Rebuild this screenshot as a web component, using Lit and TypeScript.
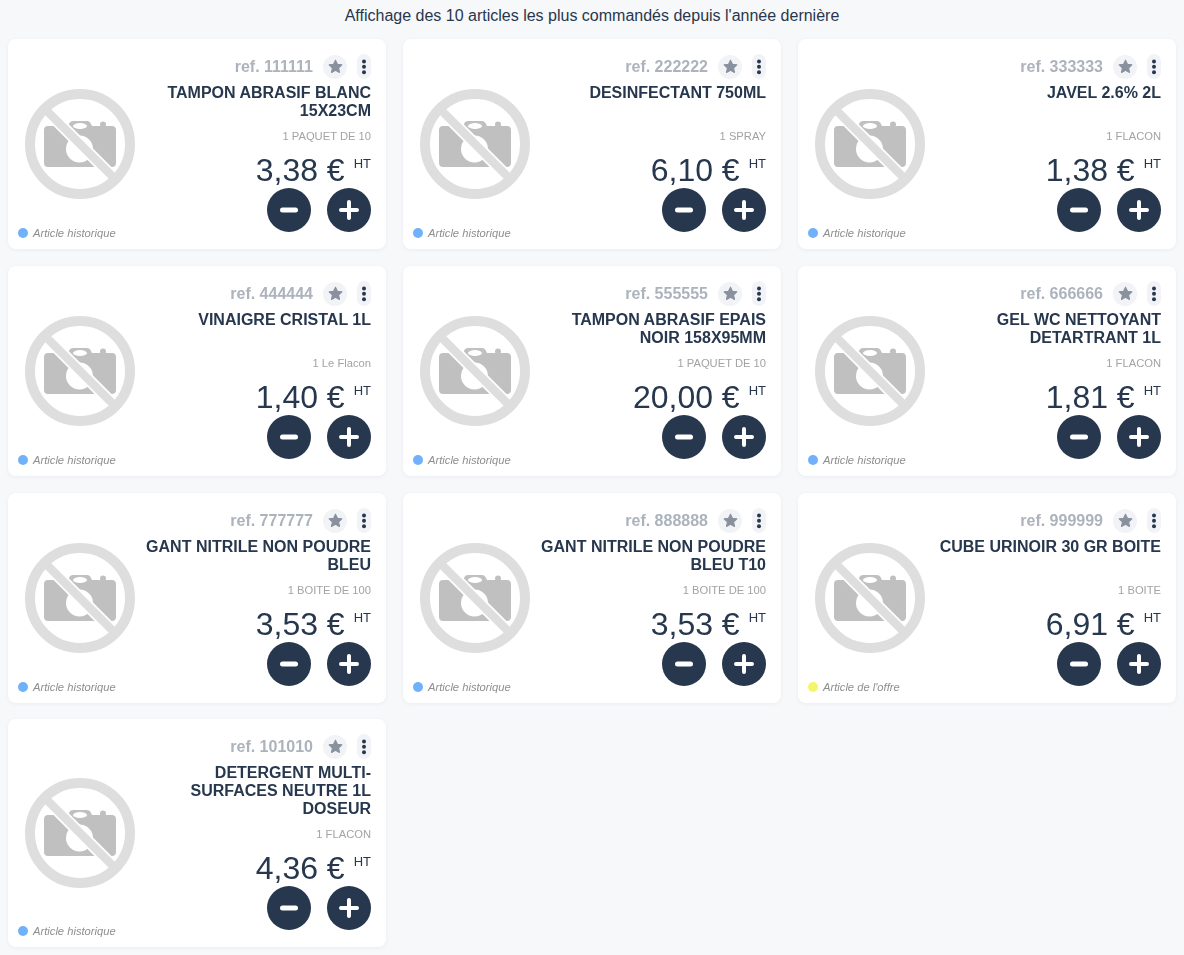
/**
 * Most ordered articles grid
 */

import { LitElement, css, html } from "lit";
import { customElement, property } from "lit/decorators.js";

interface Article {
	ref: string;
	name: string;
	unit: string;
	price: string;
	offer?: boolean;
}

const ARTICLES: Article[] = [
	{ ref: "111111", name: "TAMPON ABRASIF BLANC 15X23CM", unit: "1 PAQUET DE 10", price: "3,38" },
	{ ref: "222222", name: "DESINFECTANT 750ML", unit: "1 SPRAY", price: "6,10" },
	{ ref: "333333", name: "JAVEL 2.6% 2L", unit: "1 FLACON", price: "1,38" },
	{ ref: "444444", name: "VINAIGRE CRISTAL 1L", unit: "1 Le Flacon", price: "1,40" },
	{ ref: "555555", name: "TAMPON ABRASIF EPAIS NOIR 158X95MM", unit: "1 PAQUET DE 10", price: "20,00" },
	{ ref: "666666", name: "GEL WC NETTOYANT DETARTRANT 1L", unit: "1 FLACON", price: "1,81" },
	{ ref: "777777", name: "GANT NITRILE NON POUDRE BLEU", unit: "1 BOITE DE 100", price: "3,53" },
	{ ref: "888888", name: "GANT NITRILE NON POUDRE BLEU T10", unit: "1 BOITE DE 100", price: "3,53" },
	{ ref: "999999", name: "CUBE URINOIR 30 GR BOITE", unit: "1 BOITE", price: "6,91", offer: true },
	{ ref: "101010", name: "DETERGENT MULTI-SURFACES NEUTRE 1L DOSEUR", unit: "1 FLACON", price: "4,36" },
];

const noPhoto = html`
	<svg class="photo" viewBox="0 0 110 110" width="110" height="110">
		<path
			fill="#c0c0c0"
			d="M23 37h20l1.500-3c.7-1.300 2-2 3.500-2h14c1.500 0 2.800.7 3.500 2l1.500 3h20c2.500 0 4 1.500 4 4v33c0 2.500-1.500 4-4 4H23c-2.500 0-4-1.500-4-4V41c0-2.500 1.500-4 4-4z"
		/>
		<circle cx="78" cy="35.500" r="3" fill="#c0c0c0" />
		<ellipse cx="55" cy="37" rx="7" ry="3" fill="#fff" />
		<circle cx="54.500" cy="60" r="13.500" fill="#fff" />
		<path d="M20 20L90 90" stroke="#fff" stroke-width="12" />
		<path d="M20 20L90 90" stroke="#dedede" stroke-width="8.500" />
		<circle cx="55" cy="55" r="50" fill="none" stroke="#dedede" stroke-width="10" />
	</svg>
`;

@customElement("article-card")
export class ArticleCard extends LitElement {
	static styles = css`
		:host {
			display: block;
		}

		.card {
			position: relative;
			box-sizing: border-box;
			height: 100%;
			display: flex;
			align-items: center;
			padding: 15px 15px 16.75px;
			background: #fff;
			border-radius: 8px;
			box-shadow: 0 1px 4px rgba(39, 55, 77, 0.06);
			will-change: transform;
		}

		.photo {
			flex: none;
			margin-left: 2px;
			margin-top: 2px;
		}

		.info {
			flex: 1;
			min-width: 0;
			align-self: stretch;
			display: flex;
			flex-direction: column;
			align-items: flex-end;
			text-align: right;
		}

		.head {
			display: flex;
			align-items: center;
			gap: 10px;
			height: 25px;
		}

		.ref {
			font-size: 16px;
			font-weight: 700;
			color: #adb3bd;
		}

		.star {
			width: 24px;
			height: 24px;
			border-radius: 50%;
			background: #f1f3f6;
			display: flex;
			align-items: center;
			justify-content: center;
		}

		.kebab {
			width: 14px;
			height: 25px;
			border-radius: 7px;
			background: #f1f3f6;
			display: flex;
			align-items: center;
			justify-content: center;
		}

		.name {
			margin-top: 5px;
			min-height: 36px;
			font-size: 16px;
			line-height: 18px;
			font-weight: 700;
			color: #27374d;
		}

		.unit {
			margin-top: 9px;
			font-size: 11.2px;
			line-height: 14px;
			color: #a3a3a3;
		}

		.price {
			display: flex;
			align-items: flex-start;
			gap: 9px;
			margin-top: 9px;
			color: #27374d;
		}

		.amount {
			font-size: 32px;
			line-height: 36px;
		}

		.ht {
			font-size: 13px;
			line-height: 16px;
			margin-top: 4px;
		}

		.qty {
			display: flex;
			gap: 16px;
		}

		.qty button {
			width: 44px;
			height: 44px;
			padding: 0;
			border: none;
			border-radius: 50%;
			background: #27374d;
			display: flex;
			align-items: center;
			justify-content: center;
		}

		.legend {
			position: absolute;
			left: 10px;
			bottom: 9px;
			display: flex;
			align-items: center;
			gap: 5px;
			font-size: 11.2px;
			line-height: 14px;
			font-style: italic;
			color: #8e8e8e;
		}

		.dot {
			width: 10px;
			height: 10px;
			border-radius: 50%;
			background: #70b1fb;
		}

		.dot.offer {
			background: #f5f56b;
		}
	`;

	@property({ attribute: false }) article!: Article;

	render() {
		const a = this.article;
		return html`
			<div class="card">
				${noPhoto}
				<div class="info">
					<div class="head">
						<span class="ref">ref. ${a.ref}</span>
						<span class="star">
							<svg viewBox="0 0 24 24" width="17" height="17">
								<path
									fill="#8a919e"
									stroke="#8a919e"
									stroke-width="1.500"
									stroke-linejoin="round"
									d="M12 3l2.800 5.800 6.200.9-4.500 4.400 1.100 6.300L12 17.400l-5.600 3 1.100-6.300L3 9.700l6.200-.9z"
								/>
							</svg>
						</span>
						<span class="kebab">
							<svg viewBox="0 0 14 25" width="14" height="25">
								<circle cx="7" cy="7.500" r="2" fill="#27374d" />
								<circle cx="7" cy="12.800" r="2" fill="#27374d" />
								<circle cx="7" cy="18.200" r="2" fill="#27374d" />
							</svg>
						</span>
					</div>
					<div class="name">${a.name}</div>
					<div class="unit">${a.unit}</div>
					<div class="price">
						<span class="amount">${a.price} €</span>
						<span class="ht">HT</span>
					</div>
					<div class="qty">
						<button>
							<svg viewBox="0 0 24 24" width="24" height="24">
								<path d="M5.500 12h13" stroke="#fff" stroke-width="5" stroke-linecap="round" />
							</svg>
						</button>
						<button>
							<svg viewBox="0 0 24 24" width="24" height="24">
								<path d="M4 12h16M12 4v16" stroke="#fff" stroke-width="4" stroke-linecap="round" />
							</svg>
						</button>
					</div>
				</div>
				<div class="legend">
					<span class="dot ${a.offer ? "offer" : ""}"></span>
					${a.offer ? "Article de l'offre" : "Article historique"}
				</div>
			</div>
		`;
	}
}

@customElement("app-root")
export class AppRoot extends LitElement {
	static styles = css`
		:host {
			display: block;
			box-sizing: border-box;
			min-height: 100vh;
			padding: 0 8px 8px;
			background: #f7f8fa;
			font-family: "Liberation Sans", Arial, sans-serif;
		}

		.title {
			height: 31px;
			margin-bottom: 8px;
			font-size: 16px;
			line-height: 31px;
			text-align: center;
			color: #27374d;
		}

		.grid {
			display: grid;
			grid-template-columns: repeat(3, 1fr);
			gap: 17px;
		}
	`;

	render() {
		return html`
			<div class="title">Affichage des 10 articles les plus commandés depuis l'année dernière</div>
			<div class="grid">
				${ARTICLES.map((a) => html`<article-card .article=${a}></article-card>`)}
			</div>
		`;
	}
}
